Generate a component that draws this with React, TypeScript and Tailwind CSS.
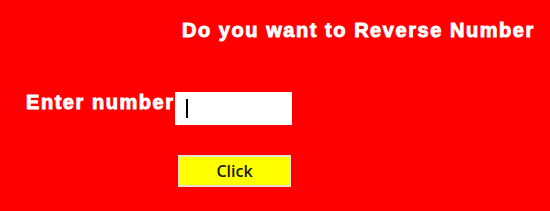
import React from "react";

export default function App() {
  return (
    <div className="w-[550px] h-[211px] bg-[#ff0000] overflow-hidden" style={{ fontFamily: "'Liberation Sans', Arial, sans-serif" }}>
      {/* Title */}
      <div className="pt-[18px] pl-[182px]">
        <h1 className="text-[20px] leading-[24px] font-bold text-white whitespace-nowrap tracking-[1.55px] [-webkit-text-stroke:0.9px_white]">
          Do you want to Reverse Number
        </h1>
      </div>

      {/* Input row */}
      <div className="flex items-start pt-[48px] pl-[26px]">
        <span className="w-[149px] text-[20px] leading-[24px] font-bold text-white whitespace-nowrap tracking-[1.55px] [-webkit-text-stroke:0.9px_white]">
          Enter number
        </span>
        <div className="mt-[2px] w-[117px] h-[33px] bg-white flex items-center pl-[11px]">
          <div className="w-[1.5px] h-[19px] bg-black" />
        </div>
      </div>

      {/* Button */}
      <div className="pt-[30px] pl-[178px]">
        <button
          className="w-[113px] h-[32px] bg-[#ffff00] border-2 border-[#e8e0c8] text-[16px] font-semibold text-[#1a1a1a] leading-none"
          style={{ fontFamily: "'Open Sans', 'Noto Sans', sans-serif" }}
        >
          Click
        </button>
      </div>
    </div>
  );
}
